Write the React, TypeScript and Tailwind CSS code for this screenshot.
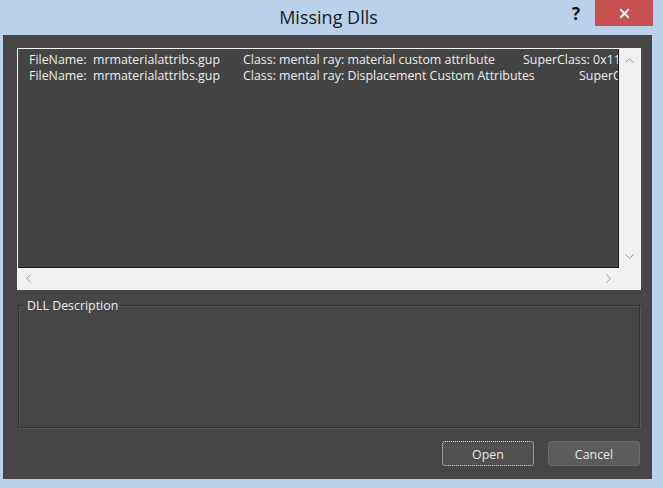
import React from 'react'
import { ChevronUp, ChevronDown, ChevronLeft, ChevronRight, X } from 'lucide-react'

const font = { fontFamily: '"Open Sans", "Noto Sans", "Liberation Sans", sans-serif' }

const rows = [
  { file: 'FileName:  mrmaterialattribs.gup', cls: 'Class: mental ray: material custom attribute', clsW: 'w-[280px]', sup: 'SuperClass: 0x1100' },
  { file: 'FileName:  mrmaterialattribs.gup', cls: 'Class: mental ray: Displacement Custom Attributes', clsW: 'w-[336px]', sup: 'SuperClass: 0x1100' },
]

function DllList() {
  return (
    <div className="h-[242px] border border-[#f4f4f4] bg-[#f0f0f0] grid grid-cols-[1fr_21px] grid-rows-[1fr_21px]">
      <div className="bg-[#444444] border-r border-b border-[#1c1c1c] overflow-hidden pt-[3px] pl-[11px]">
        {rows.map((r, i) => (
          <div key={i} className="flex whitespace-nowrap text-[12.4px] leading-[16px] text-[#ececec]">
            <span className="w-[214px] shrink-0 whitespace-pre">{r.file}</span>
            <span className={`${r.clsW} shrink-0`}>{r.cls}</span>
            <span className="shrink-0">{r.sup}</span>
          </div>
        ))}
      </div>
      <div className="flex flex-col items-center justify-between py-[4px] text-[#8f8f8f]">
        <ChevronUp size={15} strokeWidth={1.4} />
        <ChevronDown size={15} strokeWidth={1.4} />
      </div>
      <div className="flex items-center justify-between px-[3px] text-[#8f8f8f]">
        <ChevronLeft size={15} strokeWidth={1.4} />
        <ChevronRight size={15} strokeWidth={1.4} />
      </div>
      <div />
    </div>
  )
}

export default function App() {
  return (
    <div className="w-[663px] h-[488px] bg-[#b9d1ea] flex flex-col overflow-hidden" style={font}>
      <div className="relative h-[35px] shrink-0 flex justify-center pr-[6px]">
        <span className="text-[18px] leading-[35px] text-[#1b1b1b]">Missing Dlls</span>
        <span className="absolute left-[572px] top-[1px] text-[17px] font-bold text-[#111]">?</span>
        <button className="absolute left-[595px] top-0 w-[58px] h-[26px] bg-[#c75050] flex items-center justify-center text-white">
          <X size={15} strokeWidth={3} />
        </button>
      </div>

      <div className="ml-[3px] w-[649px] h-[444px] bg-[#464646] flex flex-col pt-[13px] pl-[14px] pr-[11px]">
        <DllList />

        <fieldset className="mt-[6px] h-[132px] border border-[#353535] shadow-[inset_1px_1px_0_#555,1px_1px_0_#555] ml-[1px] mr-[1px] px-[6px]">
          <legend className="px-[2px] pt-[2px] text-[12.4px] leading-[16px] text-[#ececec]">DLL Description</legend>
        </fieldset>

        <div className="mt-[13px] flex justify-end gap-[14px] pr-[1px]">
          <button className="w-[92px] h-[25px] rounded-[3px] border border-dotted border-[#dcdcdc] bg-[#505050] text-[12.4px] leading-[23px] pt-[1px] text-[#e6e6e6]">
            Open
          </button>
          <button className="w-[92px] h-[25px] rounded-[3px] border border-[#6a6a6a] bg-[#5c5c5c] text-[12.4px] leading-[23px] pt-[1px] text-[#e6e6e6]">
            Cancel
          </button>
        </div>
      </div>
    </div>
  )
}
